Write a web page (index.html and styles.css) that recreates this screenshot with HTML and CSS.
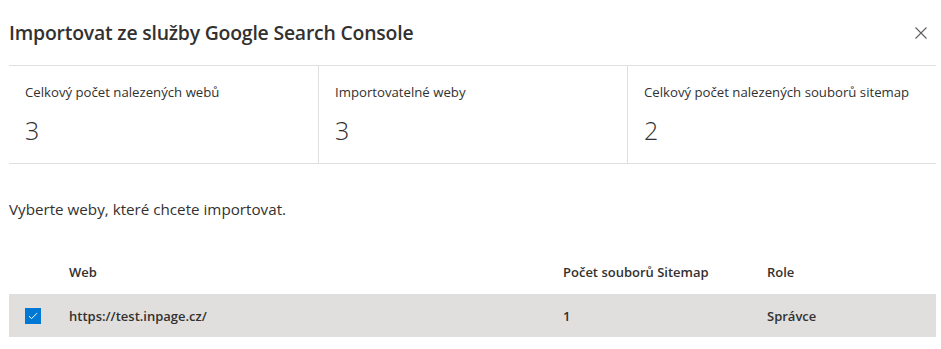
FILE: index.html
```html
<!DOCTYPE html>
<html lang="cs">
<head>
    <meta charset="UTF-8">
    <meta name="viewport" content="width=device-width, initial-scale=1.0">
    <title>Importovat ze služby Google Search Console</title>
    <link rel="stylesheet" href="styles.css">
</head>
<body>
    <div class="dialog">
        <div class="dialog-header">
            <h1 class="dialog-title">Importovat ze služby Google Search Console</h1>
            <button class="close-button" aria-label="Zavřít">
                <svg width="12" height="12" viewBox="0 0 12 12">
                    <path d="M0.5 0.5 L11.5 11.5 M11.5 0.5 L0.5 11.5" stroke="#605e5c" stroke-width="1.1" fill="none"/>
                </svg>
            </button>
        </div>

        <div class="stats">
            <div class="stat">
                <div class="stat-label">Celkový počet nalezených webů</div>
                <div class="stat-value">3</div>
            </div>
            <div class="stat">
                <div class="stat-label">Importovatelné weby</div>
                <div class="stat-value">3</div>
            </div>
            <div class="stat">
                <div class="stat-label">Celkový počet nalezených souborů sitemap</div>
                <div class="stat-value">2</div>
            </div>
        </div>

        <p class="hint">Vyberte weby, které chcete importovat.</p>

        <div class="sites">
            <div class="sites-row sites-head">
                <div class="cell"></div>
                <div class="cell">Web</div>
                <div class="cell">Počet souborů Sitemap</div>
                <div class="cell">Role</div>
            </div>
            <div class="sites-row selected">
                <div class="cell">
                    <span class="checkbox">
                        <svg width="10" height="8" viewBox="0 0 10 8">
                            <path d="M1 4.2 L3.6 6.6 L9 1.2" stroke="#fff" stroke-width="1" fill="none"/>
                        </svg>
                    </span>
                </div>
                <div class="cell">https://test.inpage.cz/</div>
                <div class="cell">1</div>
                <div class="cell">Správce</div>
            </div>
        </div>
    </div>
</body>
</html>
```

FILE: styles.css
```css
body {
    margin: 0;
    background: #fff;
    font-family: "Open Sans", "Noto Sans", sans-serif;
    color: #323130;
}
.dialog {
    padding: 0 5px 0 9px;
}
.dialog-header {
    display: flex;
    justify-content: space-between;
    align-items: center;
    height: 65px;
}
.dialog-title {
    margin: 0;
    font-size: 19.4px;
    font-weight: 600;
    letter-spacing: -0.2px;
}
.close-button {
    border: none;
    background: none;
    padding: 0;
    margin-right: 9px;
    width: 12px;
    height: 12px;
    display: flex;
    cursor: pointer;
}
.stats {
    display: grid;
    grid-template-columns: repeat(3, 1fr);
    border-top: 1px solid #e1dfdd;
    border-bottom: 1px solid #e1dfdd;
    height: 97px;
}
.stat {
    padding: 17px 16px 0;
}
.stat + .stat {
    border-left: 1px solid #e1dfdd;
}
.stat-label {
    font-size: 13.2px;
    line-height: 18px;
}
.stat-value {
    margin-top: 13px;
    font-size: 25px;
    font-weight: 300;
    line-height: 32px;
}
.hint {
    margin: 35px 0 0;
    font-size: 15.2px;
    line-height: 20px;
}
.sites {
    margin-top: 31px;
}
.sites-row {
    display: grid;
    grid-template-columns: 60px 494px 204px 1fr;
    align-items: center;
    font-size: 13px;
    font-weight: 600;
}
.sites-head {
    height: 44px;
}
.selected {
    height: 43px;
    background: #e1dfdd;
}
.cell {
    white-space: nowrap;
}
.checkbox {
    display: flex;
    align-items: center;
    justify-content: center;
    width: 16px;
    height: 16px;
    margin-left: 16px;
    background: #0078d4;
}
```
